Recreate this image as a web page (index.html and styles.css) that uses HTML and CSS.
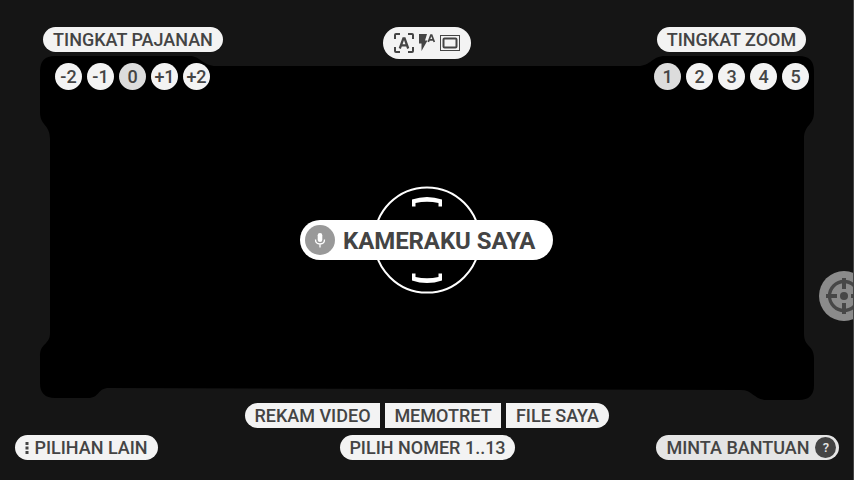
FILE: index.html
```html
<!DOCTYPE html>
<html lang="id">
<head>
<meta charset="utf-8">
<title>Kameraku Saya</title>
<link rel="stylesheet" href="styles.css">
</head>
<body>
<div class="camera">
  <svg class="viewfinder" viewBox="0 0 854 480" aria-hidden="true">
    <path d="M55 56H190C200 56 203 66 216 66H638C651 66 652 56 665 56H799Q814 56 814 71V112C814 126 804 124 804 139V334C804 347 814 345 814 358V385Q814 400 799 400H767C754 400 753 390 741 390L109 388C97 388 100 398 88 398H55Q40 398 40 383V356C40 343 50 345 50 333V139C50 124 40 126 40 112V71Q40 56 55 56Z"/>
    <ellipse class="focus-ring" cx="427" cy="240" rx="52.500" ry="52.600"/>
    <path class="focus-mark" d="M412 206.500V199.500Q427 194.500 442 199.500V206.500H438.500V203Q427 200.500 415.500 203V206.500Z"/>
    <path class="focus-mark" d="M412 273.500V280.500Q427 285.500 442 280.500V273.500H438.500V277Q427 279.500 415.500 277V273.500Z"/>
  </svg>

  <header class="top">
    <section class="exposure">
      <h2 class="pill exposure-title">TINGKAT PAJANAN</h2>
      <div class="steps"><span>-2</span><span>-1</span><span class="on">0</span><span>+1</span><span>+2</span></div>
    </section>
    <div class="modes">
      <svg width="68" height="22" viewBox="0 0 68 22" aria-hidden="true">
        <g fill="none" stroke="#444" stroke-width="2"><path d="M2 7V3Q2 2 3 2H7M15 2H19Q20 2 20 3V7M20 15V19Q20 20 19 20H15M7 20H3Q2 20 2 19V15"/><path stroke-width="2.300" d="M6.800 16.500L10.400 6.300H11.600L15.200 16.500M8 13.300H14"/></g>
        <path fill="#444" d="M26 2H34L32 8.500H34.500L28.500 19V11.500H26Z"/>
        <path fill="none" stroke="#444" stroke-width="1.700" d="M35.300 10L37.900 3H38.700L41.300 10M36.200 7.800H40.400"/>
        <rect x="47.500" y="3.500" width="19" height="15" fill="none" stroke="#444"/>
        <rect x="50.500" y="6.500" width="13" height="9" rx="1" fill="none" stroke="#444" stroke-width="2"/>
      </svg>
    </div>
    <section class="zoom">
      <h2 class="pill zoom-title">TINGKAT ZOOM</h2>
      <div class="steps"><span class="on">1</span><span>2</span><span>3</span><span>4</span><span>5</span></div>
    </section>
  </header>

  <main class="stage">
    <h1 class="title">
      <svg width="30" height="30" viewBox="0 0 30 30" aria-hidden="true"><circle cx="15" cy="15" r="15" fill="#999"/><rect x="12.700" y="8" width="4.600" height="9" rx="2.300" fill="#fff"/><path d="M10.500 14.500C10.500 20.500 19.500 20.500 19.500 14.500M15 19V22.500" fill="none" stroke="#fff" stroke-width="1.300"/></svg>
      <span class="title-text">KAMERAKU SAYA</span>
    </h1>
  </main>

  <nav class="actions">
    <span class="pill record">REKAM VIDEO</span>
    <span class="pill photo">MEMOTRET</span>
    <span class="pill files">FILE SAYA</span>
  </nav>
  <footer class="bottom">
    <span class="pill more"><svg width="4" height="14" viewBox="0 0 4 14" aria-hidden="true"><path fill="#444" d="M.5 1h3v3h-3zM.5 5.500h3v3h-3zM.5 10h3v3h-3z"/></svg><span>PILIHAN LAIN</span></span>
    <span class="pill number">PILIH NOMER 1..13</span>
    <span class="pill help"><span>MINTA BANTUAN</span><span class="question">?</span></span>
  </footer>

  <div class="target">
    <svg width="50" height="50" viewBox="0 0 50 50" aria-hidden="true"><circle cx="25" cy="25" r="25" fill="#8b8b8b"/><g stroke="#474747" fill="none"><circle cx="25" cy="25" r="14.500" stroke-width="3.300"/><path stroke-width="4" d="M25 7V18M25 32V43M7 25H18M32 25H43"/></g><circle cx="25" cy="25" r="4" fill="#474747"/></svg>
  </div>
</div>
</body>
</html>
```

FILE: styles.css
```css
* { box-sizing: border-box; }
body { margin: 0; background: #151515; }
.camera {
  position: relative;
  display: flex;
  flex-direction: column;
  width: 854px;
  height: 480px;
  padding: 27px 15px 20px;
  overflow: hidden;
  background: #151515;
  color: #444;
  font: 500 18px/25px Roboto, "Liberation Sans", sans-serif;
}
.camera::after {
  content: "";
  position: absolute;
  top: 0;
  right: 0;
  width: 1px;
  height: 480px;
  background: #444;
}
.viewfinder { position: absolute; top: 0; left: 0; width: 854px; height: 480px; }
.focus-ring { fill: none; stroke: #fff; stroke-width: 2; }
.focus-mark { fill: #fff; }
.top, .stage, .actions, .bottom { position: relative; }

.pill {
  display: flex;
  flex: none;
  align-items: center;
  justify-content: center;
  height: 25px;
  margin: 0;
  border-radius: 13px;
  background: #f3f3f3;
  font-size: 18px;
  font-weight: 500;
  white-space: nowrap;
}
.top { display: flex; height: 63px; padding: 0 29px 0 28px; }
.exposure { width: 340px; }
.exposure-title { width: 180px; }
.exposure .steps { margin-left: 12px; }
.modes {
  display: flex;
  flex: none;
  align-items: center;
  justify-content: center;
  width: 88px;
  height: 32px;
  border-radius: 16px;
  background: #f3f3f3;
}
.zoom { margin-left: 183px; }
.zoom-title { width: 149px; margin-left: 3px; }
.steps { display: flex; gap: 5px; margin-top: 11px; }
.steps span {
  flex: none;
  width: 27px;
  height: 27px;
  border-radius: 50%;
  background: #f3f3f3;
  line-height: 27px;
  text-align: center;
}
.steps .on { background: #dcdcdc; }

.stage { display: flex; height: 300px; margin-top: 13px; padding: 117px 0 0 285px; }
.title {
  display: flex;
  align-items: center;
  gap: 8px;
  width: 253px;
  height: 40px;
  margin: 0;
  padding-left: 5px;
  border-radius: 20px;
  background: #fff;
  font-size: 24px;
  font-weight: 700;
  white-space: nowrap;
}
.title-text { padding-top: 2px; letter-spacing: -.08px; }
.actions { display: flex; justify-content: center; gap: 5px; }
.record { width: 135px; border-radius: 13px 0 0 13px; }
.photo { width: 116px; border-radius: 0; }
.files { width: 103px; border-radius: 0 13px 13px 0; }
.bottom { display: flex; margin-top: 7px; }
.more { gap: 5px; width: 143px; }
.number { width: 175px; margin-left: 182px; }
.help { gap: 6px; width: 183px; margin-left: 141px; padding-left: 8px; background: #e5e5e5; }
.question {
  width: 21px;
  height: 21px;
  border-radius: 50%;
  background: #444;
  color: #e5e5e5;
  font-size: 13px;
  line-height: 21px;
  text-align: center;
}
.target { position: absolute; top: 271px; left: 819px; height: 50px; }
```
